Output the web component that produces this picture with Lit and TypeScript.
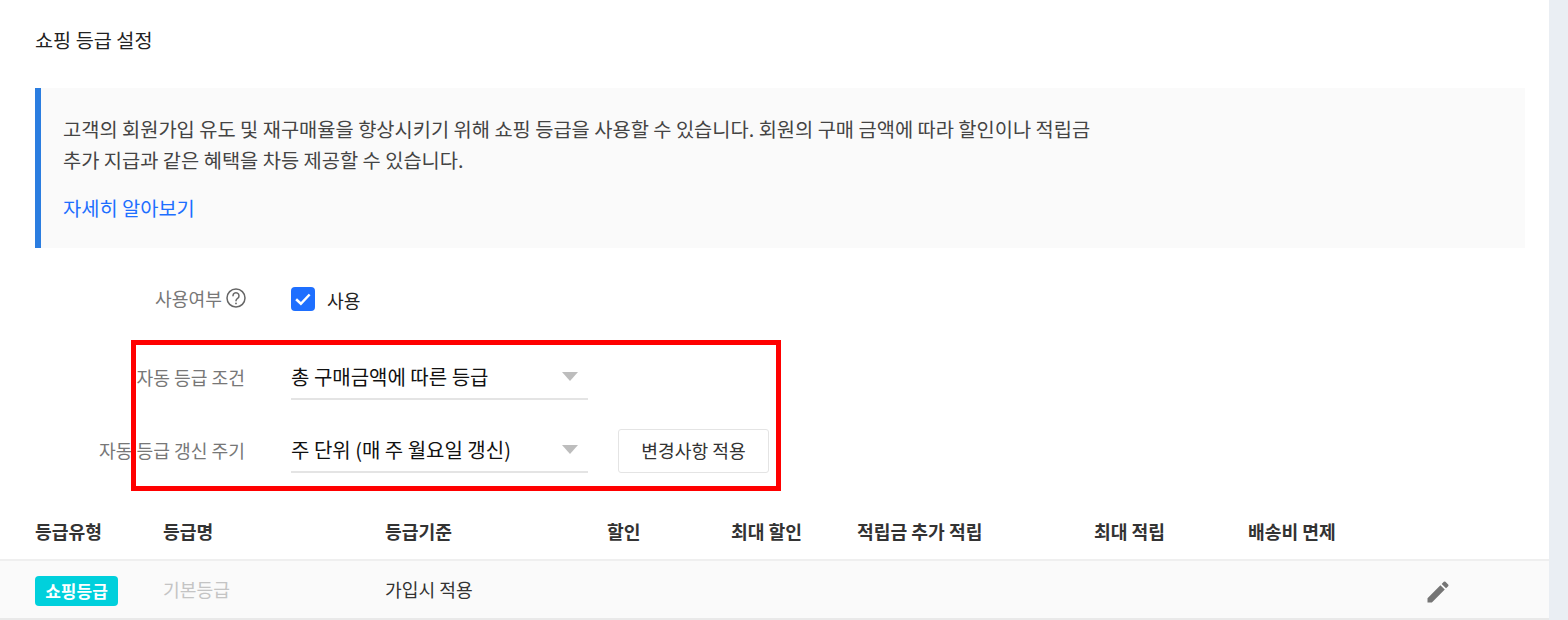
import { LitElement, html, css } from "lit";
import { customElement } from "lit/decorators.js";

@customElement("app-root")
export class AppRoot extends LitElement {
  static styles = css`
    :host {
      display: block;
      width: 1568px;
      height: 620px;
      overflow: hidden;
      background: #eaeef3;
      font-family: "Noto Sans CJK KR", "Noto Sans", sans-serif;
      color: #333;
    }
    .panel {
      position: relative;
      width: 1549px;
      height: 620px;
      background: #fff;
      display: flex;
      flex-direction: column;
    }
    h1 {
      margin: 0;
      padding: 26px 0 0 35px;
      height: 88px;
      flex: none;
      box-sizing: border-box;
      font-size: 19.7px;
      line-height: 28px;
      font-weight: 400;
      color: #222;
    }
    .notice {
      margin-left: 35px;
      width: 1490px;
      height: 160px;
      flex: none;
      box-sizing: border-box;
      background: #fafafa;
      border-left: 6px solid #2b7de0;
      padding: 25px 22px 0;
      font-size: 19.8px;
      line-height: 31px;
      color: #444;
    }
    .notice p { margin: 0; }
    .notice a { display: block; margin-top: 17px; color: #1e6fff; text-decoration: none; }
    .form { display: flex; flex-direction: column; padding-top: 32px; }
    .row { display: grid; grid-template-columns: 245px 297px auto; column-gap: 46px; align-items: center; }
    .use { height: 38px; }
    .sel-row { height: 46px; margin-top: 27px; }
    .sel-row.first { margin-top: 36px; }
    .label { text-align: right; font-size: 18.2px; color: #777; display: flex; justify-content: flex-end; align-items: center; gap: 4px; }
    .use .label { padding-bottom: 2px; }
    .help { margin-right: -1px; }
    .check { display: flex; align-items: center; gap: 12px; font-size: 18.2px; color: #222; }
    .check span.txt { margin-top: 2px; }
    .box { width: 24px; height: 24px; border-radius: 4px; background: #1e6fff; display: flex; align-items: center; justify-content: center; }
    .select {
      height: 46px;
      box-sizing: border-box;
      border-bottom: 2px solid #e4e4e4;
      display: flex;
      align-items: center;
      justify-content: space-between;
      font-size: 20px;
      color: #111;
      padding-right: 10px;
    }
    .caret { width: 0; height: 0; border-left: 8px solid transparent; border-right: 8px solid transparent; border-top: 9px solid #bdbdbd; }
    .btn {
      margin-left: -16px;
      margin-top: 2px;
      width: 151px;
      height: 44px;
      box-sizing: border-box;
      background: #fff;
      border: 1px solid #e4e4e4;
      border-radius: 3px;
      font: inherit;
      font-size: 18.2px;
      color: #333;
      padding: 0 0 2px;
    }
    .cols { display: grid; grid-template-columns: 128px 222px 222px 124px 126px 237px 154px 176px 1fr; padding-left: 35px; }
    .head { height: 88px; align-items: center; font-size: 18.2px; font-weight: 700; color: #333; border-bottom: 2px solid #efefef; box-sizing: border-box; padding-top: 30px; }
    .body { height: 59px; box-sizing: border-box; align-items: center; background: #fafafa; border-bottom: 2px solid #e9e9e9; padding-bottom: 2px; font-size: 18.2px; color: #333; }
    .tag { display: block; width: 83px; height: 30px; margin-top: 4px; border-radius: 4px; background: #00d0dc; color: #fff; font-size: 17px; font-weight: 700; line-height: 30px; text-align: center; }
    .muted { color: #c4c4c4; }
    .edit { display: block; margin-top: 6px; }
    .red {
      position: absolute;
      left: 131px;
      top: 340px;
      width: 650px;
      height: 151px;
      box-sizing: border-box;
      border: 5px solid #ff0000;
      pointer-events: none;
    }
  `;

  render() {
    return html`
      <div class="panel">
        <h1>쇼핑 등급 설정</h1>
        <div class="notice">
          <p>고객의 회원가입 유도 및 재구매율을 향상시키기 위해 쇼핑 등급을 사용할 수 있습니다. 회원의 구매 금액에 따라 할인이나 적립금<br />추가 지급과 같은 혜택을 차등 제공할 수 있습니다.</p>
          <a href="#">자세히 알아보기</a>
        </div>
        <div class="form">
          <div class="row use">
            <div class="label">사용여부
              <svg class="help" width="20" height="20" viewBox="0 0 20 20" fill="none" stroke="#666" stroke-width="1.5">
                <circle cx="10" cy="10" r="9"></circle>
                <path d="M7 7.8a3 3 0 1 1 4.6 2.5c-1.1.7-1.6 1.2-1.6 2.4" stroke-linecap="round"></path>
                <circle cx="10" cy="15.4" r=".9" fill="#666" stroke="none"></circle>
              </svg>
            </div>
            <div class="check">
              <span class="box"><svg width="20" height="20" viewBox="0 0 16 16" fill="none" stroke="#fff" stroke-width="2"><path d="M2.5 8.2l3.8 3.6 7-7.4"></path></svg></span>
              <span class="txt">사용</span>
            </div>
          </div>
          <div class="row sel-row first">
            <div class="label">자동 등급 조건</div>
            <div class="select">총 구매금액에 따른 등급<span class="caret"></span></div>
          </div>
          <div class="row sel-row">
            <div class="label">자동 등급 갱신 주기</div>
            <div class="select">주 단위 (매 주 월요일 갱신)<span class="caret"></span></div>
            <button class="btn">변경사항 적용</button>
          </div>
        </div>
        <div class="table">
          <div class="cols head">
            <div>등급유형</div><div>등급명</div><div>등급기준</div><div>할인</div><div>최대 할인</div><div>적립금 추가 적립</div><div>최대 적립</div><div>배송비 면제</div><div></div>
          </div>
          <div class="cols body">
            <div><span class="tag">쇼핑등급</span></div>
            <div class="muted">기본등급</div>
            <div>가입시 적용</div>
            <div></div><div></div><div></div><div></div>
            <div></div>
            <div>
              <svg class="edit" width="28" height="28" viewBox="0 0 24 24" fill="#757575"><path d="M3 17.25V21h3.75L17.81 9.94l-3.75-3.75L3 17.25zM20.71 7.04a1 1 0 0 0 0-1.41l-2.34-2.34a1 1 0 0 0-1.41 0l-1.83 1.83 3.75 3.75 1.83-1.83z"></path></svg>
            </div>
          </div>
        </div>
        <div class="red"></div>
      </div>
    `;
  }
}
